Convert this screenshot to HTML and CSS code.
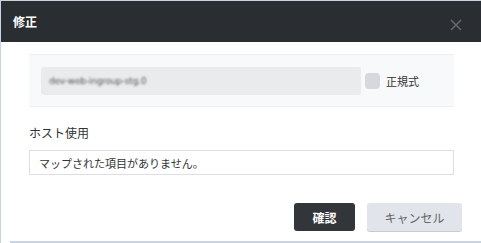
FILE: index.html
```html
<!DOCTYPE html>
<html lang="ja">
<head>
<meta charset="utf-8">
<link rel="stylesheet" href="styles.css">
</head>
<body>
<div class="frame">
  <div class="header">
    <span class="title">修正</span>
    <svg class="close" width="12" height="12" viewBox="0 0 12 12"><path d="M1 1L11 11M11 1L1 11" stroke="#6b6e72" stroke-width="1.3" fill="none"/></svg>
  </div>
  <div class="body">
    <div class="panel">
      <div class="field"><span class="blur">dev-web-ingroup-stg.0</span></div>
      <span class="check"></span>
      <span class="check-label">正規式</span>
    </div>
    <div class="label">ホスト使用</div>
    <div class="box">マップされた項目がありません。</div>
    <div class="footer">
      <button class="btn primary">確認</button>
      <button class="btn secondary">キャンセル</button>
    </div>
  </div>
  <div class="bottom-line"></div>
</div>
</body>
</html>
```
FILE: styles.css
```css
* { box-sizing: border-box; }
html, body { margin: 0; padding: 0; background: #fff; }
body { font-family: "Noto Sans CJK JP", "Noto Sans", sans-serif; }
.frame {
  width: 481px;
  height: 243px;
  border-top: 1px solid #c9d3e2;
  border-left: 1px solid #c9d3e2;
  background: #fff;
  display: flex;
  flex-direction: column;
  position: relative;
}
.header {
  height: 41px;
  flex: none;
  background: #2a2d31;
  display: flex;
  align-items: center;
  justify-content: space-between;
  padding: 0 19px 0 12px;
}
.title { color: #fff; font-weight: 700; font-size: 12px; }
.close { margin-top: 6px; }
.body { padding: 12px 27px 0 28px; flex: 1; display: flex; flex-direction: column; }
.panel {
  height: 53px;
  background: #f8f9fa;
  border-top: 1px solid #eceef0;
  border-bottom: 1px solid #eceef0;
  display: flex;
  align-items: center;
  padding: 0 12px;
}
.field {
  width: 320px;
  height: 28px;
  background: #eaebed;
  border-radius: 3px;
  display: flex;
  align-items: center;
  padding-left: 8px;
}
.blur { font-size: 9px; color: #555; filter: blur(0.9px); font-family: "DejaVu Sans", sans-serif; letter-spacing: -0.2px; }
.check {
  width: 15px; height: 16px; background: #d5d8dc; border-radius: 4px; margin-left: 4px;
}
.check-label { font-size: 11px; color: #333; margin-left: 6px; }
.label { font-size: 12px; color: #333; margin-top: 17px; line-height: 18px; }
.box {
  margin-top: 8px;
  height: 25px;
  border: 1px solid #dcdfe3;
  font-size: 11px;
  color: #333;
  padding-left: 9px;
  display: flex;
  align-items: center;
}
.footer { display: flex; justify-content: flex-end; gap: 12px; margin-top: 28px; margin-right: -8px; }
.btn {
  height: 28px;
  border: none;
  border-radius: 3px;
  font-family: inherit;
  font-size: 12px;
  padding: 0;
}
.primary { width: 61px; background: #32363b; color: #fff; font-weight: 700; }
.secondary { width: 95px; background: #e1e5eb; color: #666; box-shadow: 0 1px 0 #c8ccd2; }
.bottom-line {
  position: absolute;
  left: 9px; right: 0; bottom: 0;
  height: 2px;
  background: #c9d3e2;
}
```
